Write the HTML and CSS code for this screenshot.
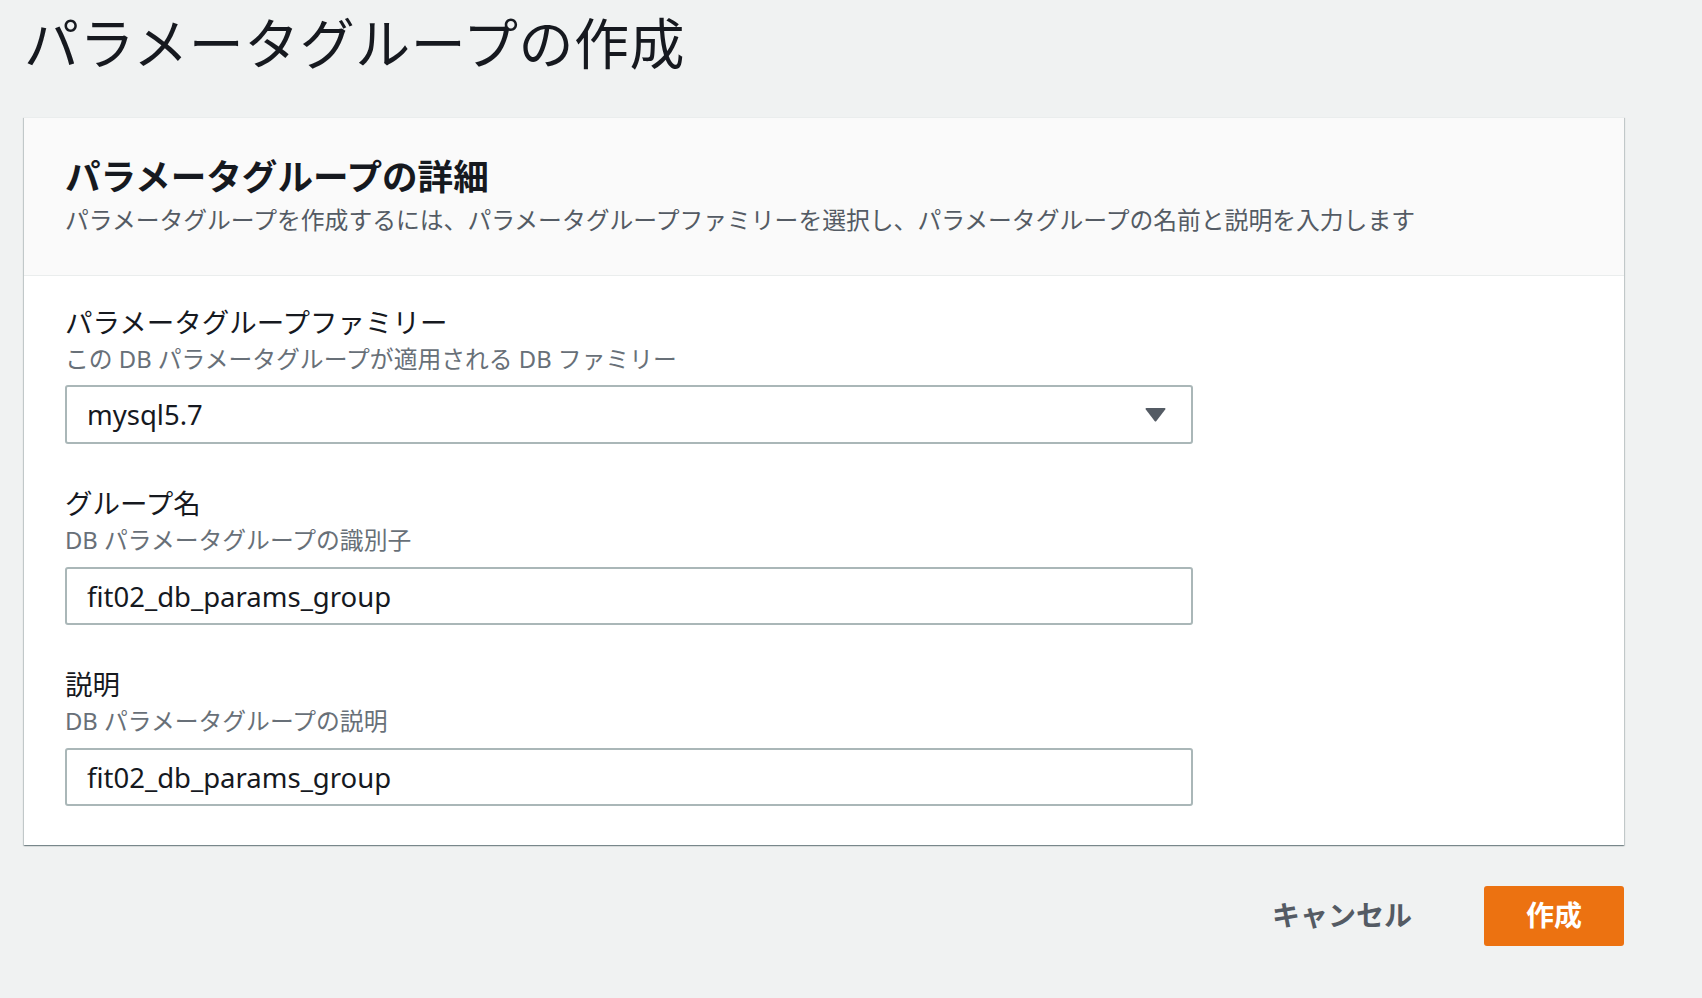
FILE: index.html
```html
<!DOCTYPE html>
<html lang="ja">
<head>
    <meta charset="UTF-8">
    <meta name="viewport" content="width=device-width, initial-scale=1.0">
    <title>パラメータグループの作成</title>
    <link rel="stylesheet" href="styles.css">
</head>
<body>
    <div class="page">
        <h1 class="page-title">パラメータグループの作成</h1>

        <div class="card">
            <div class="card-header">
                <h2>パラメータグループの詳細</h2>
                <p class="card-desc">パラメータグループを作成するには、パラメータグループファミリーを選択し、パラメータグループの名前と説明を入力します</p>
            </div>
            <div class="card-body">
                <div class="form-field">
                    <label class="field-label">パラメータグループファミリー</label>
                    <div class="field-hint">この DB パラメータグループが適用される DB ファミリー</div>
                    <div class="select-box">
                        <span>mysql5.7</span>
                        <svg class="caret" width="21" height="15" viewBox="0 0 21 15">
                            <path d="M1.5 1 H19.5 Q21 1 20.2 2.4 L11.4 14 Q10.5 15 9.6 14 L0.8 2.4 Q0 1 1.5 1 Z" fill="#545b64"/>
                        </svg>
                    </div>
                </div>
                <div class="form-field">
                    <label class="field-label">グループ名</label>
                    <div class="field-hint">DB パラメータグループの識別子</div>
                    <input class="text-input" type="text" value="fit02_db_params_group">
                </div>
                <div class="form-field">
                    <label class="field-label">説明</label>
                    <div class="field-hint">DB パラメータグループの説明</div>
                    <input class="text-input" type="text" value="fit02_db_params_group">
                </div>
            </div>
        </div>

        <div class="actions">
            <button class="cancel-btn">キャンセル</button>
            <button class="create-btn">作成</button>
        </div>
    </div>
</body>
</html>
```

FILE: styles.css
```css
body {
    margin: 0;
    background-color: #f0f2f2;
    color: #16191f;
    font-family: "Noto Sans", "Noto Sans CJK JP", sans-serif;
}
.page {
    padding: 0 78px 40px 24px;
}
.page-title {
    margin: 0;
    font-size: 55px;
    line-height: 80px;
    font-weight: 400;
    font-family: "Noto Sans CJK JP", sans-serif;
    letter-spacing: 0.5px;
}
.card {
    margin-top: 37px;
    background: #fff;
    border-top: 1px solid #eaeded;
    box-shadow: 0 1px 1px 0 rgba(0, 28, 36, 0.3), 1px 1px 1px 0 rgba(0, 28, 36, 0.15), -1px 1px 1px 0 rgba(0, 28, 36, 0.15);
}
.card-header {
    background: #fafafa;
    padding: 36px 41px 38px;
    border-bottom: 1px solid #eaeded;
}
.card-header h2 {
    margin: 0;
    font-size: 35.6px;
    line-height: 44px;
    font-weight: 700;
}
.card-desc {
    margin: 5px 0 0;
    font-size: 23.8px;
    line-height: 34px;
    color: #545b64;
}
.card-body {
    padding: 28px 41px 39px;
}
.form-field + .form-field {
    margin-top: 41px;
}
.field-label {
    display: block;
    font-size: 27.5px;
    line-height: 38px;
}
.field-hint {
    font-size: 23.8px;
    line-height: 34px;
    color: #687078;
}
.select-box, .text-input {
    box-sizing: border-box;
    width: 1128px;
    height: 59px;
    border: 2px solid #aab7b8;
    border-radius: 3px;
    background: #fff;
    font-family: "Noto Sans", "Noto Sans CJK JP", sans-serif;
    font-size: 27.5px;
    color: #16191f;
}
.select-box {
    margin-top: 9px;
    display: flex;
    align-items: center;
    justify-content: space-between;
    padding: 0 25px 0 20px;
}
.text-input {
    display: block;
    margin-top: 10px;
    height: 58px;
    padding: 0 20px;
    outline: none;
}
.actions {
    display: flex;
    justify-content: flex-end;
    align-items: center;
    gap: 72px;
    margin-top: 41px;
}
.actions button {
    font-family: "Noto Sans CJK JP", sans-serif;
    font-size: 28px;
    font-weight: 700;
    border: none;
    cursor: pointer;
    line-height: 1;
}
.cancel-btn {
    background: none;
    color: #545b64;
    padding: 0 0 4px;
}
.create-btn {
    width: 140px;
    height: 60px;
    padding: 0 0 4px;
    background: #ec7211;
    color: #fff;
    border-radius: 3px;
}
```
